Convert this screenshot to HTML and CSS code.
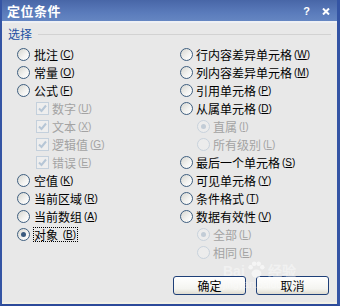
FILE: index.html
```html
<!DOCTYPE html>
<html lang="zh-CN">
<head>
  <meta charset="UTF-8" />
  <title>定位条件</title>
  <link rel="stylesheet" href="styles.css">
</head>
<body>
  <div class="dialog">
    <div class="titlebar">
      <span class="title">定位条件</span>
      <span class="help">?</span>
      <svg class="close" width="8" height="7" viewBox="0 0 8 7">
        <path d="M1 0.5 L7 6.5 M7 0.5 L1 6.5" stroke="#fff" stroke-width="2" />
      </svg>
    </div>

    <div class="content">
      <div class="group-label">
        <span>选择</span>
        <span class="rule"></span>
      </div>

      <div class="options">
        <div class="col">
          <div class="opt"><span class="radio"></span>批注 <span class="key">(<u>C</u>)</span></div>
          <div class="opt"><span class="radio"></span>常量 <span class="key">(<u>O</u>)</span></div>
          <div class="opt"><span class="radio"></span>公式 <span class="key">(<u>F</u>)</span></div>
          <div class="opt sub disabled"><span class="check"><svg width="11" height="11" viewBox="0 0 11 11"><path d="M2 5.5 L4.5 8 L9 2.5" fill="none" stroke="#b6c6d6" stroke-width="2" /></svg></span>数字 <span class="key">(<u>U</u>)</span></div>
          <div class="opt sub disabled"><span class="check"><svg width="11" height="11" viewBox="0 0 11 11"><path d="M2 5.5 L4.5 8 L9 2.5" fill="none" stroke="#b6c6d6" stroke-width="2" /></svg></span>文本 <span class="key">(<u>X</u>)</span></div>
          <div class="opt sub disabled"><span class="check"><svg width="11" height="11" viewBox="0 0 11 11"><path d="M2 5.5 L4.5 8 L9 2.5" fill="none" stroke="#b6c6d6" stroke-width="2" /></svg></span>逻辑值 <span class="key">(<u>G</u>)</span></div>
          <div class="opt sub disabled"><span class="check"><svg width="11" height="11" viewBox="0 0 11 11"><path d="M2 5.5 L4.5 8 L9 2.5" fill="none" stroke="#b6c6d6" stroke-width="2" /></svg></span>错误 <span class="key">(<u>E</u>)</span></div>
          <div class="opt"><span class="radio"></span>空值 <span class="key">(<u>K</u>)</span></div>
          <div class="opt"><span class="radio"></span>当前区域 <span class="key">(<u>R</u>)</span></div>
          <div class="opt"><span class="radio"></span>当前数组 <span class="key">(<u>A</u>)</span></div>
          <div class="opt"><span class="radio checked"></span><span class="focus">对象 <span class="key">(<u>B</u>)</span></span></div>
        </div>

        <div class="col">
          <div class="opt"><span class="radio"></span>行内容差异单元格 <span class="key">(<u>W</u>)</span></div>
          <div class="opt"><span class="radio"></span>列内容差异单元格 <span class="key">(<u>M</u>)</span></div>
          <div class="opt"><span class="radio"></span>引用单元格 <span class="key">(<u>P</u>)</span></div>
          <div class="opt"><span class="radio"></span>从属单元格 <span class="key">(<u>D</u>)</span></div>
          <div class="opt sub disabled"><span class="radio checked"></span>直属 <span class="key">(<u>I</u>)</span></div>
          <div class="opt sub disabled"><span class="radio"></span>所有级别 <span class="key">(<u>L</u>)</span></div>
          <div class="opt"><span class="radio"></span>最后一个单元格 <span class="key">(<u>S</u>)</span></div>
          <div class="opt"><span class="radio"></span>可见单元格 <span class="key">(<u>Y</u>)</span></div>
          <div class="opt"><span class="radio"></span>条件格式 <span class="key">(<u>T</u>)</span></div>
          <div class="opt"><span class="radio"></span>数据有效性 <span class="key">(<u>V</u>)</span></div>
          <div class="opt sub disabled"><span class="radio checked"></span>全部 <span class="key">(<u>L</u>)</span></div>
          <div class="opt sub disabled"><span class="radio"></span>相同 <span class="key">(<u>E</u>)</span></div>
        </div>
      </div>

      <div class="buttons">
        <button>确定</button>
        <button>取消</button>
      </div>
    </div>

    <!-- faint site watermark over the lower right -->
    <div class="watermark">
      <span class="wm-logo">Bai</span>
      <svg class="wm-paw" width="18" height="18" viewBox="0 0 20 20">
        <circle cx="4" cy="7" r="2.5" fill="#fff" />
        <circle cx="8" cy="3" r="2.5" fill="#fff" />
        <circle cx="13" cy="3" r="2.5" fill="#fff" />
        <circle cx="17" cy="7" r="2.5" fill="#fff" />
        <ellipse cx="10.5" cy="14" rx="5.5" ry="4.5" fill="#fff" />
      </svg>
      <span class="wm-logo">经验</span>
      <div class="wm-url">jingyan.baidu.com</div>
    </div>
  </div>
</body>
</html>
```

FILE: styles.css
```css
* {
  box-sizing: border-box;
}
body, html {
  margin: 0;
  padding: 0;
  font-family: "Noto Sans CJK SC", sans-serif;
  font-size: 12px;
  color: #000;
  background: #e8e8e8;
}
.dialog {
  position: relative;
  width: 340px;
  height: 306px;
  border-left: 2px solid #3454a4;
  border-right: 3px solid #3454a4;
  border-bottom: 2px solid #2c4a9a;
  background: #e8e8e8;
  display: flex;
  flex-direction: column;
}
.titlebar {
  height: 23px;
  display: flex;
  align-items: center;
  padding: 1px 7px 0 5px;
  background: linear-gradient(#4866a7, #5a7bbb 60%, #6586c2);
  border-bottom: 2px solid #eef0f4;
  color: #fff;
}
.title {
  font-size: 13px;
  font-weight: bold;
  line-height: 16px;
  letter-spacing: 0.5px;
}
.help {
  margin-left: auto;
  font-family: "Liberation Sans", sans-serif;
  font-size: 11px;
  font-weight: bold;
  line-height: 11px;
}
.close {
  margin-left: 12px;
}
.content {
  flex: 1;
  padding: 4px 0 0 0;
  border-bottom: 2px solid #f1f0e6;
  display: flex;
  flex-direction: column;
}
.group-label {
  display: flex;
  align-items: center;
  height: 14px;
  padding: 0 6px 0 6px;
  color: #2350a2;
  line-height: 14px;
}
.rule {
  flex: 1;
  height: 1px;
  margin-left: 6px;
  background: #d2d2d2;
}
.options {
  margin-top: 4px;
  display: grid;
  grid-template-columns: 163px 1fr;
  padding-left: 15px;
}
.opt {
  display: flex;
  align-items: center;
  height: 18px;
  white-space: nowrap;
}
.opt.sub {
  padding-left: 17px;
}
.col:first-child .opt.sub {
  padding-left: 19px;
}
.disabled {
  color: #a3a3a3;
}
.key {
  font-family: "Liberation Sans", sans-serif;
  font-size: 10px;
  margin-left: 2px;
}
.radio {
  width: 13px;
  height: 13px;
  margin-right: 3px;
  border-radius: 50%;
  border: 1px solid #3f5f80;
  background: linear-gradient(135deg, #d6d6d0, #f4f4f2 60%, #ffffff);
  display: flex;
  align-items: center;
  justify-content: center;
  flex-shrink: 0;
}
.col:first-child .radio {
  margin-right: 4px;
}
.radio.checked::after {
  content: "";
  width: 5px;
  height: 5px;
  border-radius: 50%;
  background: #3a5a7e;
}
.disabled .radio {
  border-color: #c8d2dc;
  background: #ececec;
}
.disabled .radio.checked::after {
  background: #c2ccd6;
}
.check {
  width: 13px;
  height: 13px;
  margin-right: 3px;
  border: 1px solid #c4d0dc;
  background: #eeeeee;
  display: flex;
  align-items: center;
  justify-content: center;
  flex-shrink: 0;
}
.focus {
  display: inline-flex;
  align-items: center;
  white-space: pre;
  height: 15px;
  margin-left: -1px;
  padding: 0 1px 0 0;
  border: 1px dotted #000;
}
.buttons {
  margin-top: 15px;
  display: flex;
  justify-content: flex-end;
  gap: 10px;
  padding-right: 8px;
}
button {
  width: 73px;
  height: 19px;
  padding: 0;
  border: 1px solid #1e3f78;
  border-radius: 3px;
  background: linear-gradient(#ffffff, #f4f4f0 70%, #dedbd0);
  font-family: "Noto Sans CJK SC", sans-serif;
  font-size: 12px;
  line-height: 16px;
  color: #000;
}
.watermark {
  position: absolute;
  left: 221px;
  top: 261px;
  width: 100px;
  display: flex;
  flex-wrap: wrap;
  align-items: flex-end;
  color: rgba(255, 255, 255, 0.7);
  opacity: 0.6;
  pointer-events: none;
}
.wm-logo {
  font-family: "Liberation Sans", sans-serif;
  font-size: 14px;
  font-weight: bold;
  line-height: 15px;
}
.wm-paw {
  margin: 0 3px 0 2px;
}
.wm-url {
  width: 100%;
  font-family: "Liberation Sans", sans-serif;
  font-size: 10px;
  line-height: 11px;
}
```
